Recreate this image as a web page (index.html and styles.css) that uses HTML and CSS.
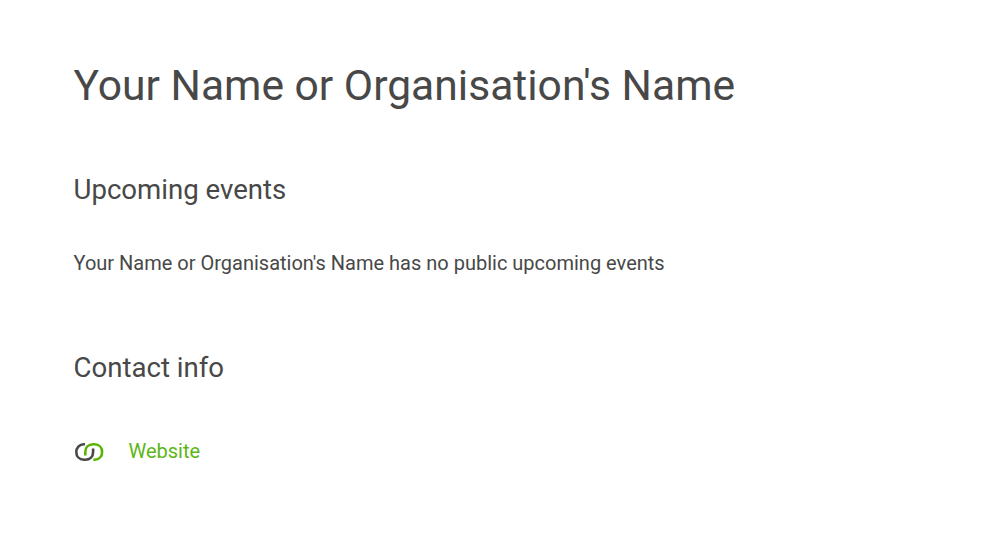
FILE: index.html
```html
<!DOCTYPE html>
<html lang="en">
<head>
    <meta charset="UTF-8">
    <meta name="viewport" content="width=device-width, initial-scale=1.0">
    <title>Your Name or Organisation's Name</title>
    <link rel="stylesheet" href="styles.css">
</head>
<body>
    <main class="profile">
        <h1>Your Name or Organisation's Name</h1>
        <section class="events">
            <h2>Upcoming events</h2>
            <p>Your Name or Organisation's Name has no public upcoming events</p>
        </section>
        <section class="contact">
            <h2>Contact info</h2>
            <div class="contact-item">
                <svg class="link-icon" width="30" height="20" viewBox="0 0 30 20" fill="none" stroke-width="2.6">
                    <path class="link-dark" d="M11 2.3H9.9C5.2 2.3 2.3 5.7 2.3 10S5.2 17.7 9.9 17.7h1.3c4.9 0 7.9-3.2 7.9-7.7V6.5"/>
                    <path class="link-green" d="M11.3 13.5V10c0-4.5 3-7.7 7.9-7.7h1.3c4.7 0 7.6 3.4 7.6 7.7s-2.9 7.7-7.6 7.7h-1.1"/>
                </svg>
                <a href="#">Website</a>
            </div>
        </section>
    </main>
</body>
</html>
```
FILE: styles.css
```css
body {
    font-family: Roboto, sans-serif;
    background-color: #fff;
    color: #484848;
    margin: 0;
}
.profile {
    padding: 60px 73.5px 0;
}
h1, h2, p {
    margin: 0;
    font-weight: 400;
}
h1 {
    font-size: 42.6px;
    line-height: 50px;
}
h2 {
    font-size: 27.6px;
    line-height: 32px;
}
p,
.contact-item {
    font-size: 20px;
    line-height: 28px;
}
.events {
    margin-top: 64px;
}
.events p {
    margin-top: 43px;
}
.contact {
    margin-top: 75px;
}
.contact-item {
    display: flex;
    align-items: center;
    gap: 25px;
    margin-top: 53px;
}
.contact-item a {
    color: #5cb615;
    text-decoration: none;
}
.link-icon {
    margin-top: 2px;
}
.link-dark {
    stroke: #484848;
}
.link-green {
    stroke: #58b400;
}
```
